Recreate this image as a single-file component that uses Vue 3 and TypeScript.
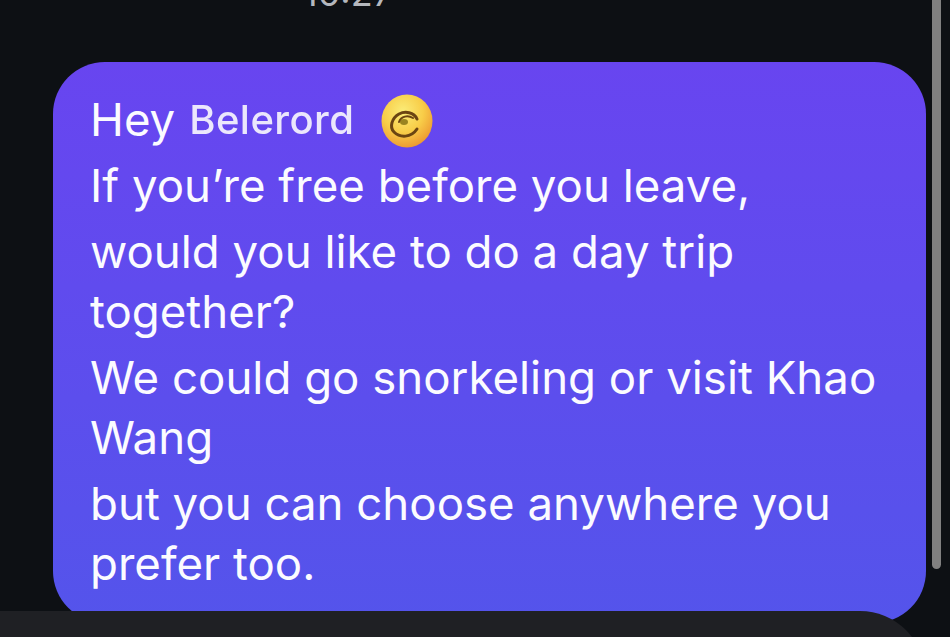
<script setup lang="ts">
const paragraphs: string[][] = [
  ["If you’re free before you leave,"],
  ["would you like to do a day trip", "together?"],
  ["We could go snorkeling or visit Khao", "Wang"],
  ["but you can choose anywhere you", "prefer too."],
];
</script>

<template>
  <main class="screen">
    <div class="time">10:27</div>
    <section class="bubble">
      <p class="greeting">
        <span>Hey</span>
        <span class="name">Belerord</span>
        <svg class="emoji" viewBox="0 0 52 54" aria-hidden="true">
          <defs>
            <radialGradient id="face" cx="42%" cy="32%" r="72%">
              <stop offset="0%" stop-color="#fbec78" />
              <stop offset="55%" stop-color="#f8cd48" />
              <stop offset="100%" stop-color="#ec9530" />
            </radialGradient>
          </defs>
          <ellipse cx="26" cy="27" rx="25.5" ry="26.5" fill="url(#face)" />
          <path d="M36 25C33 18 24 17 18 20C11 24 8 33 13 38C19 44 30 44 36 35" fill="none" stroke="#6b4512" stroke-width="3" stroke-linecap="round" />
          <ellipse cx="23" cy="28" rx="4" ry="3" fill="#9a8420" />
          <path d="M18 28C20 22 27 21 32 24" fill="none" stroke="#6b4512" stroke-width="2" stroke-linecap="round" />
        </svg>
      </p>
      <div v-for="(lines, i) in paragraphs" :key="i" class="paragraph">
        <div v-for="line in lines" :key="line" class="line">{{ line }}</div>
      </div>
    </section>
    <div class="scrollbar"></div>
    <div class="composer"></div>
  </main>
</template>

<style>
html, body { margin: 0; background: #0d1014; }
</style>

<style scoped>
.screen {
  position: relative;
  width: 950px;
  height: 637px;
  overflow: hidden;
  background: #0d1014;
  font-family: Inter, "Liberation Sans", sans-serif;
}
.time {
  height: 62px;
  margin-top: -27px;
  padding-left: 303px;
  margin-bottom: 27px;
  font-size: 36px;
  line-height: 40px;
  color: #b4b7bd;
  box-sizing: border-box;
}
.bubble {
  box-sizing: border-box;
  width: 873px;
  height: 561px;
  margin-left: 53px;
  padding: 28px 20px 0 37px;
  border-radius: 52px;
  background: linear-gradient(180deg, #6845f0 0%, #5454eb 100%);
  color: #fbfbff;
  font-size: 45.6px;
  line-height: 60.5px;
}
.greeting {
  display: flex;
  align-items: center;
  margin: 0 0 5px;
  height: 61px;
}
.name {
  margin-left: 14px;
  font-size: 40px;
  font-weight: 500;
  letter-spacing: 0.45px;
  color: #ebe7fc;
  filter: blur(0.7px);
}
.emoji {
  width: 52px;
  height: 54px;
  margin-left: 27px;
}
.paragraph {
  margin-bottom: 5px;
}
.line {
  white-space: nowrap;
}
.scrollbar {
  position: absolute;
  top: 0;
  left: 932px;
  width: 9px;
  height: 569px;
  border-radius: 0 0 5px 5px;
  background: #808080;
}
.composer {
  position: absolute;
  left: -40px;
  top: 611px;
  width: 965px;
  height: 80px;
  border-radius: 0 65px 0 0;
  background: #1f2024;
}
</style>
